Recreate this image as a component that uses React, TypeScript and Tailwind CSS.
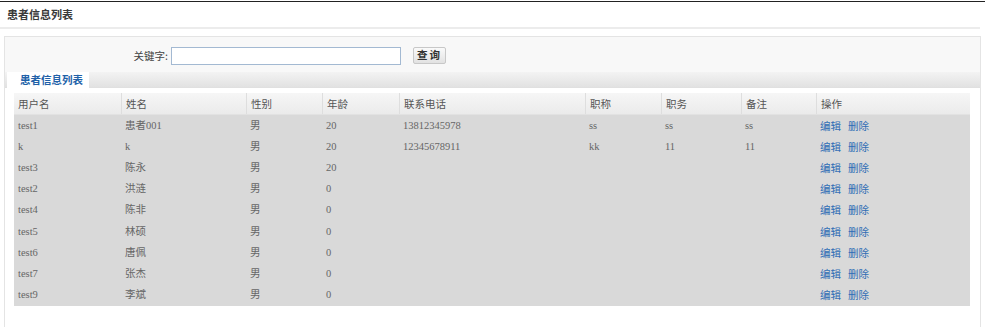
import React from "react";

const cols = [
  { key: "user", label: "用户名", w: "w-[107px]" },
  { key: "name", label: "姓名", w: "w-[125px]" },
  { key: "sex", label: "性别", w: "w-[76px]" },
  { key: "age", label: "年龄", w: "w-[77px]" },
  { key: "tel", label: "联系电话", w: "w-[186px]" },
  { key: "title", label: "职称", w: "w-[76px]" },
  { key: "duty", label: "职务", w: "w-[80px]" },
  { key: "memo", label: "备注", w: "w-[75px]" },
  { key: "op", label: "操作", w: "flex-1" },
];

const rows = [
  { user: "test1", name: "患者001", sex: "男", age: "20", tel: "13812345978", title: "ss", duty: "ss", memo: "ss" },
  { user: "k", name: "k", sex: "男", age: "20", tel: "12345678911", title: "kk", duty: "11", memo: "11" },
  { user: "test3", name: "陈永", sex: "男", age: "20", tel: "", title: "", duty: "", memo: "" },
  { user: "test2", name: "洪涟", sex: "男", age: "0", tel: "", title: "", duty: "", memo: "" },
  { user: "test4", name: "陈非", sex: "男", age: "0", tel: "", title: "", duty: "", memo: "" },
  { user: "test5", name: "林硕", sex: "男", age: "0", tel: "", title: "", duty: "", memo: "" },
  { user: "test6", name: "唐佩", sex: "男", age: "0", tel: "", title: "", duty: "", memo: "" },
  { user: "test7", name: "张杰", sex: "男", age: "0", tel: "", title: "", duty: "", memo: "" },
  { user: "test9", name: "李斌", sex: "男", age: "0", tel: "", title: "", duty: "", memo: "" },
];

const font = "font-['Liberation_Serif','Noto_Sans_CJK_SC',serif]";
const cjk = "font-['Noto_Sans_CJK_SC',sans-serif]";

export default function App() {
  return (
    <div className={`w-[985px] h-[327px] bg-white overflow-hidden ${font} text-[12px]`}>
      <div className="h-[1px] mt-[1px] bg-[#222]" />
      <div className="h-[25px] flex items-center pl-[7px]">
        <span className={`${cjk} font-bold text-[11px] text-[#3a3a3a] leading-none`}>
          患者信息列表
        </span>
      </div>
      <div className="h-[2px] w-[980px] bg-[#ececec]" />
      <div className="ml-[4px] mt-[7px] w-[977px] h-[300px] border border-[#e4e4e4] border-b-0 flex flex-col">
        {/* search bar */}
        <div className="h-[35px] bg-[#f8f8f8] flex items-center pt-[2px]">
          <div className={`w-[166px] text-right text-[#444] ${cjk} text-[10.5px] pr-[3px]`}>
            关键字:
          </div>
          <div className="w-[230px] h-[18px] border border-[#a3b9d2] bg-white" />
          <button className={`ml-[12px] w-[33px] h-[17px] border border-[#c8c8c8] bg-gradient-to-b from-[#fafafa] to-[#e2e2e2] text-[10.5px] text-[#333] ${cjk} font-bold leading-none flex items-center justify-center tracking-[2px] rounded-[2px]`}>
            查询
          </button>
        </div>
        {/* tab bar */}
        <div className="h-[16px] bg-gradient-to-b from-[#f3f3f3] to-[#e2e2e2] border-b border-[#e0e0e0] flex">
          <div className={`ml-[2px] w-[82px] h-[16px] bg-white flex items-center pl-[13px] text-[10.5px] font-bold text-[#2161a8] ${cjk} leading-none`}>
            患者信息列表
          </div>
        </div>
        {/* table */}
        <div className="mt-[5px] ml-[9px] w-[956px]">
          <div className={`flex h-[22px] bg-gradient-to-b from-[#f6f6f6] to-[#ebebeb] border-b border-[#e2e2e2] text-[#555] ${cjk} text-[10.5px]`}>
            {cols.map((c, i) => (
              <div
                key={c.key}
                className={`${c.w} flex items-center pl-[4px] ${i > 0 ? "border-l border-[#dedede]" : ""}`}
              >
                {c.label}
              </div>
            ))}
          </div>
          {rows.map((r) => (
            <div key={r.user} className="flex h-[21.2px] bg-[#d9d9d9] text-[#666] text-[10.5px]">
              {cols.map((c) => (
                <div key={c.key} className={`${c.w} flex items-center pl-[4px] whitespace-nowrap`}>
                  {c.key === "op" ? (
                    <span className={`text-[#2f6db5] ${cjk} flex gap-[7px]`}>
                      <span>编辑</span>
                      <span>删除</span>
                    </span>
                  ) : (
                    (r as Record<string, string>)[c.key]
                  )}
                </div>
              ))}
            </div>
          ))}
        </div>
      </div>
    </div>
  );
}
